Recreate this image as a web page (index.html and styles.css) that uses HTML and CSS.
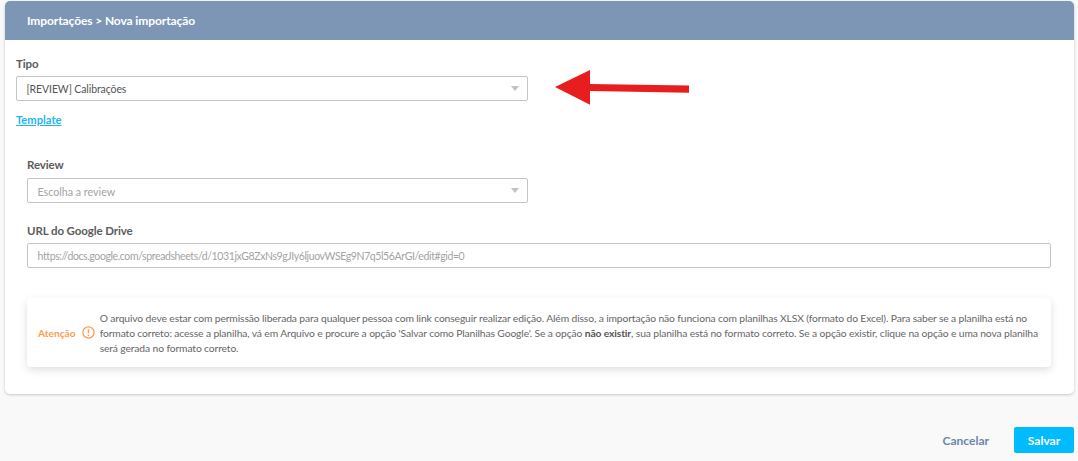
FILE: index.html
```html
<!DOCTYPE html>
<html lang="pt-BR">
<head>
<meta charset="utf-8">
<title>Nova importação</title>
<link rel="stylesheet" href="styles.css">
</head>
<body>
<main class="card">
  <header class="card-head">Importações &gt; Nova importação</header>
  <div class="card-body">
    <section class="type-block">
      <label class="label">Tipo</label>
      <div class="select-row">
        <div class="select">
          <span class="value">[REVIEW] Calibrações</span>
          <span class="caret"></span>
        </div>
        <svg class="arrow" width="136" height="36" viewBox="0 0 136 36"><path d="M0 17L35 0V14L134 15.500V22.700L35 21V34.700Z" fill="#e81e1e"/></svg>
      </div>
      <a class="template" href="#">Template</a>
    </section>
    <section class="fields">
      <label class="label review-label">Review</label>
      <div class="select">
        <span class="placeholder">Escolha a review</span>
        <span class="caret"></span>
      </div>
      <label class="label url-label">URL do Google Drive</label>
      <div class="input"><span class="placeholder">https://docs.google.com/spreadsheets/d/1031jxG8ZxNs9gJIy6ljuovWSEg9N7q5l56ArGI/edit#gid=0</span></div>
    </section>
    <aside class="notice">
      <div class="notice-tag">
        <span>Atenção</span>
        <svg width="13" height="13" viewBox="0 0 13 13"><circle cx="6.500" cy="6.500" r="5.600" fill="none" stroke="#ff9b4e" stroke-width="1.300"/><path d="M6.500 3.200V7.300M6.500 8.600V10" stroke="#ff9b4e" stroke-width="1.400" fill="none"/></svg>
      </div>
      <p class="notice-text">O arquivo deve estar com permissão liberada para qualquer pessoa com link conseguir realizar edição. Além disso, a importação não funciona com planilhas XLSX (formato do Excel). Para saber se a planilha está no formato correto: acesse a planilha, vá em Arquivo e procure a opção 'Salvar como Planilhas Google'. Se a opção <b>não existir</b>, sua planilha está no formato correto. Se a opção existir, clique na opção e uma nova planilha será gerada no formato correto.</p>
    </aside>
  </div>
</main>
<footer class="actions">
  <button class="btn-cancel">Cancelar</button>
  <button class="btn-save">Salvar</button>
</footer>
</body>
</html>
```
FILE: styles.css
```css
* { box-sizing: border-box; }
html, body { margin: 0; height: 100%; }
body {
  background: #f9f9f9;
  font-family: "Lato", sans-serif;
  color: #555;
  padding: 1px 4px 0 5px;
  overflow: hidden;
}
.card {
  height: 393px;
  background: #fff;
  border-radius: 5px;
  box-shadow: 0 1px 3px rgba(0,0,0,.2);
  overflow: hidden;
}
.card-head {
  height: 39px;
  background: #7d96b6;
  color: #fff;
  font-size: 12px;
  font-weight: 700;
  line-height: 39px;
  padding-left: 22px;
  letter-spacing: -.1px;
}
.card-body { padding: 16px 22px 0 11px; }
.label {
  display: block;
  font-size: 11.500px;
  line-height: 16px;
  font-weight: 700;
  color: #5c5c5c;
  letter-spacing: -.1px;
  margin-bottom: 4px;
}
.select-row { display: flex; align-items: center; gap: 27px; height: 25px; }
.select, .input {
  width: 512px;
  height: 25px;
  flex: none;
  border: 1px solid #c4c4c4;
  border-radius: 2px;
  background: #fff;
  font-size: 10.700px;
  line-height: 23px;
  padding: 0 8px 0 9.500px;
  display: flex;
  justify-content: space-between;
  align-items: center;
}
.value, .placeholder { padding-top: 2px; }
.value { color: #555; font-size: 10.500px; letter-spacing: -.1px; }
.placeholder { color: #a3a3a3; }
.caret {
  width: 0;
  height: 0;
  border-left: 4px solid transparent;
  border-right: 4px solid transparent;
  border-top: 5px solid #c2c2c2;
}
.arrow { flex: none; margin-top: -2px; }
.template {
  display: inline-block;
  margin-top: 11px;
  font-size: 11.200px;
  line-height: 16px;
  font-weight: 700;
  color: #1fb6f0;
}
.fields { margin-top: 29px; padding-left: 11px; }
.fields .select { width: 501px; }
.review-label { margin-bottom: 5px; }
.url-label { margin-top: 20px; }
.fields .input { width: 1024px; font-size: 10.500px; letter-spacing: -.39px; }
.notice {
  margin: 30px 0 0 11px;
  width: 1024px;
  height: 69px;
  border-radius: 4px;
  background: #fff;
  box-shadow: 0 3px 8px rgba(0,0,0,.13);
  display: flex;
  align-items: center;
  padding: 0 8px 0 11px;
}
.notice-tag {
  flex: none;
  display: flex;
  align-items: center;
  gap: 6px;
  color: #ff9b4e;
  font-size: 10.200px;
  font-weight: 700;
  margin-right: 5px;
}
.notice-text {
  margin: 0;
  padding-top: 2px;
  font-size: 10.300px;
  line-height: 15px;
  letter-spacing: -.12px;
  color: #666;
}
.notice-text b { font-weight: 700; color: #555; }
.actions {
  display: flex;
  justify-content: flex-end;
  align-items: center;
  gap: 25px;
  margin-top: 33px;
}
.btn-cancel, .btn-save {
  border: 0;
  font-family: inherit;
  font-size: 12px;
  font-weight: 700;
  padding: 0;
}
.btn-cancel { background: none; color: #6c86a8; }
.btn-save { width: 60px; height: 26px; background: #00bcff; color: #fff; border-radius: 2px; }
```
